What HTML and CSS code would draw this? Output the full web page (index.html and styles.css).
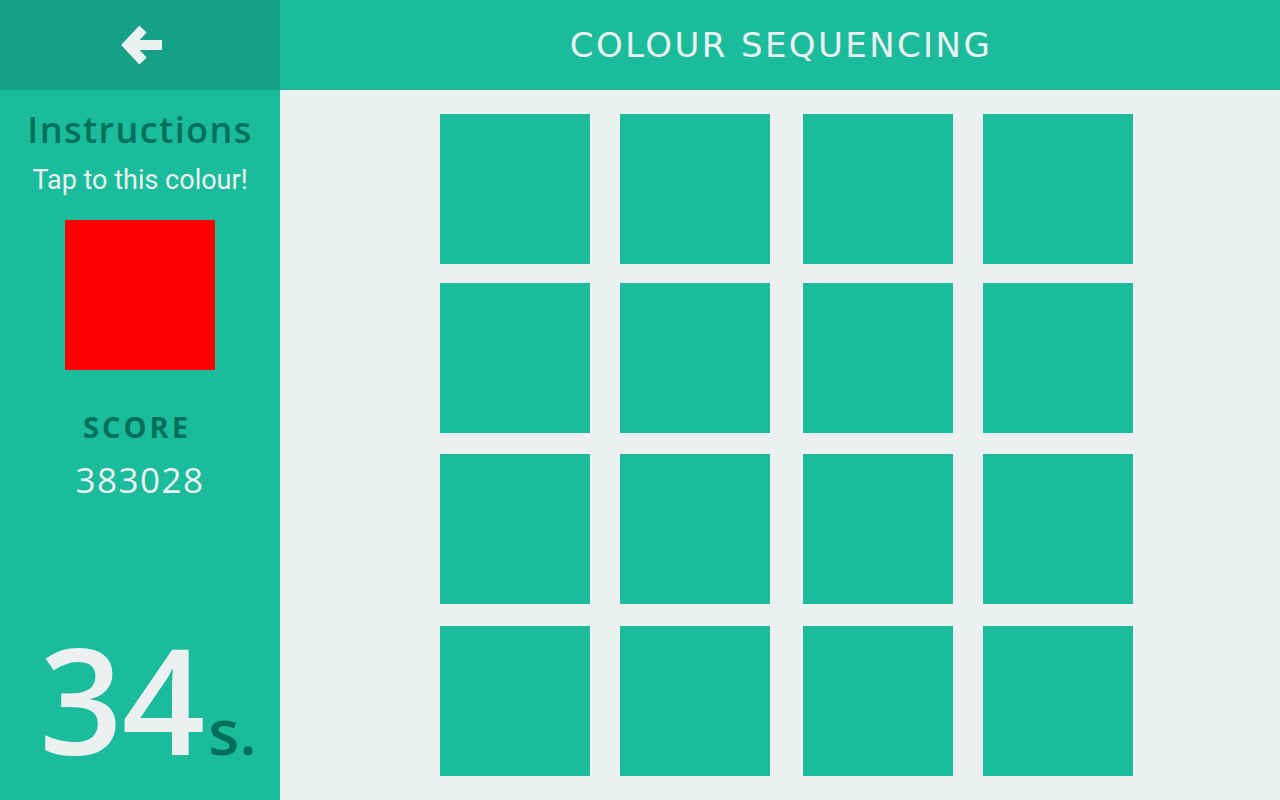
FILE: index.html
```html
<!DOCTYPE html>
<html>
<head>
<meta charset="utf-8">
<link rel="stylesheet" href="styles.css">
</head>
<body>
<div class="app">
  <div class="back">
    <svg width="60" height="60" viewBox="110 15 60 60" class="back-icon">
      <path d="M143 29 L128 45 L143 61" fill="none" stroke="#ecf0f1" stroke-width="10" stroke-linejoin="miter" stroke-linecap="butt"/>
      <rect x="128" y="40" width="34" height="10" fill="#ecf0f1"/>
    </svg>
  </div>
  <div class="header"><h1 class="title">COLOUR SEQUENCING</h1></div>
  <aside class="sidebar">
    <h2 class="instr">Instructions</h2>
    <p class="tap">Tap to this colour!</p>
    <div class="target"></div>
    <div class="score-label">SCORE</div>
    <div class="score">383028</div>
    <div class="timer"><span class="secs">34</span><span class="unit">s.</span></div>
  </aside>
  <main class="board">
    <div class="grid">
      <div class="tile"></div><div class="tile"></div><div class="tile"></div><div class="tile"></div>
      <div class="tile"></div><div class="tile"></div><div class="tile"></div><div class="tile"></div>
      <div class="tile"></div><div class="tile"></div><div class="tile"></div><div class="tile"></div>
      <div class="tile"></div><div class="tile"></div><div class="tile"></div><div class="tile"></div>
    </div>
  </main>
</div>
</body>
</html>
```

FILE: styles.css
```css
html, body {
  margin: 0;
  padding: 0;
  height: 100%;
}
body {
  font-family: "Open Sans", "DejaVu Sans", sans-serif;
  background: #ecf0f1;
}
.app {
  display: grid;
  grid-template-columns: 280px 1fr;
  grid-template-rows: 90px 1fr;
  width: 1280px;
  height: 800px;
}
.back {
  background: #16a085;
  display: flex;
  align-items: center;
  justify-content: center;
}
.back-icon {
  display: block;
}
.header {
  background: #1abc9c;
  display: flex;
  align-items: center;
  justify-content: center;
  padding-left: 2px;
}
.title {
  margin: 0;
  color: #ecf0f1;
  font-family: "DejaVu Sans", sans-serif;
  font-weight: 400;
  font-size: 34px;
  letter-spacing: 2.4px;
  line-height: 1;
}
.sidebar {
  background: #1abc9c;
  display: flex;
  flex-direction: column;
  align-items: center;
  color: #ecf0f1;
}
.instr {
  margin: 16px 0 0;
  font-size: 36px;
  font-weight: 600;
  color: #00705a;
  letter-spacing: 1.4px;
  line-height: 48px;
}
.tap {
  margin: 6px 0 0;
  font-family: Roboto, sans-serif;
  font-size: 27px;
  line-height: 40px;
}
.target {
  width: 150px;
  height: 150px;
  background: #ff0000;
  margin-top: 20px;
}
.score-label {
  margin-top: 37px;
  font-size: 29px;
  font-weight: 700;
  color: #00705a;
  letter-spacing: 3px;
  line-height: 40px;
  padding-right: 6px;
}
.score {
  margin-top: 11px;
  font-size: 35px;
  font-weight: 400;
  letter-spacing: 1.5px;
  line-height: 44px;
}
.timer {
  margin-top: auto;
  margin-bottom: 28px;
  display: flex;
  align-items: baseline;
  line-height: 1;
  padding-left: 16px;
}
.secs {
  font-size: 146px;
  font-weight: 600;
  color: #ecf0f1;
  letter-spacing: -1px;
}
.unit {
  font-size: 64px;
  font-weight: 600;
  color: #00705a;
  margin-left: 4px;
}
.board {
  padding: 24px 0 0 160px;
}
.grid {
  display: grid;
  grid-template-columns: 180px 183px 180px 150px;
  grid-template-rows: 169px 171px 172px 150px;
}
.tile {
  width: 150px;
  height: 150px;
  background: #1abc9c;
}
```
